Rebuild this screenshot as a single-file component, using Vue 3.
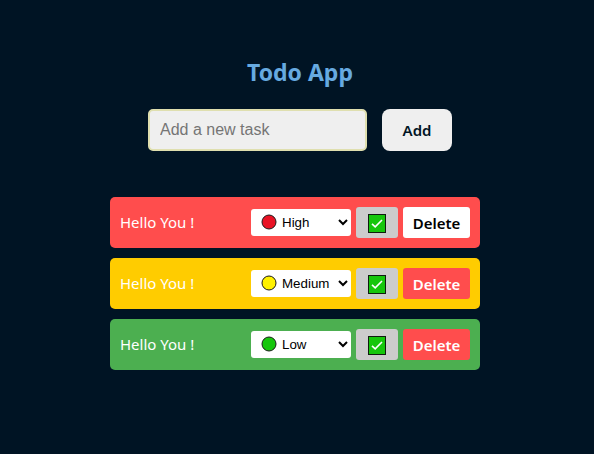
<script setup>
import { ref } from 'vue'

const draft = ref('')
const tasks = ref([
  { id: 1, text: 'Hello You !', priority: 'high' },
  { id: 2, text: 'Hello You !', priority: 'medium' },
  { id: 3, text: 'Hello You !', priority: 'low' },
])
let nextId = 4

function addTask() {
  const text = draft.value.trim()
  if (!text) return
  tasks.value.push({ id: nextId++, text, priority: 'low' })
  draft.value = ''
}

function removeTask(id) {
  tasks.value = tasks.value.filter((task) => task.id !== id)
}
</script>

<template>
  <main class="app">
    <h1 class="title">Todo App</h1>
    <form class="form" @submit.prevent="addTask">
      <input v-model="draft" class="field" type="text" placeholder="Add a new task" aria-label="New task" />
      <button class="add" type="submit">Add</button>
    </form>
    <ul class="list">
      <li v-for="task in tasks" :key="task.id" class="task" :class="task.priority">
        <span class="text">{{ task.text }}</span>
        <label class="picker">
          <select v-model="task.priority" class="select" aria-label="Priority">
            <option value="high">High</option>
            <option value="medium">Medium</option>
            <option value="low">Low</option>
          </select>
          <svg class="dot" viewBox="0 0 16 16" aria-hidden="true">
            <circle cx="8" cy="8" r="7" />
          </svg>
        </label>
        <button class="done" type="button" aria-label="Complete">
          <svg class="tick" viewBox="0 0 18 19" aria-hidden="true">
            <rect x="0.5" y="0.5" width="17" height="18" fill="#16c60c" stroke="#101c10" />
            <path d="M4 9.8 L7.2 12.8 L14 6" fill="none" stroke="#fff" stroke-width="1.6" />
          </svg>
        </button>
        <button class="delete" type="button" @click="removeTask(task.id)">Delete</button>
      </li>
    </ul>
  </main>
</template>

<style>
body {
  margin: 0;
  background: #001424;
}
</style>

<style scoped>
.app {
  box-sizing: border-box;
  max-width: 386px;
  margin: 0 auto;
  padding: 56px 0 40px 6px;
  font-family: "Segoe UI", "Noto Sans", "Open Sans", sans-serif;
  font-size: 15px;
}
.title {
  margin: 0;
  color: #67aae0;
  font-size: 23px;
  font-weight: 700;
  line-height: 33px;
  text-align: center;
}
.form {
  display: flex;
  justify-content: center;
  gap: 15px;
  margin: 20px 0 46px;
}
.field {
  box-sizing: border-box;
  width: 219px;
  height: 42px;
  padding: 10px;
  border: 2px solid #dfdfaf;
  border-radius: 5px;
  background: #efefef;
  font-family: "Liberation Sans", Arial, sans-serif;
  font-size: 16px;
}
.field::placeholder {
  color: #757575;
}
button {
  border: 0;
  font-family: inherit;
  font-size: 15px;
  font-weight: 600;
  cursor: pointer;
}
.add {
  width: 70px;
  padding: 0;
  border-radius: 8px;
  background: #efefef;
  color: #001424;
}
.list {
  display: flex;
  flex-direction: column;
  gap: 10px;
  margin: 0;
  padding: 0 10px 0 0;
  list-style: none;
}
.task {
  display: flex;
  align-items: center;
  gap: 5px;
  padding: 10px;
  border-radius: 5px;
  color: #fff;
}
.text {
  flex: 1;
  line-height: 21px;
}
.high {
  background: #ff4d4d;
}
.medium {
  background: #ffcc00;
}
.low {
  background: #4caf50;
}
.picker {
  position: relative;
  display: block;
}
.select {
  display: block;
  width: 100px;
  height: 27px;
  padding: 0 0 0 27px;
  border: 0;
  border-radius: 3px;
  background-color: #fff;
  color: #000;
  font-family: "Liberation Sans", Arial, sans-serif;
}
.dot {
  position: absolute;
  top: 5px;
  left: 10px;
  width: 16px;
  height: 16px;
  stroke: #1a1a1a;
  pointer-events: none;
}
.high .dot {
  fill: #e81224;
}
.medium .dot {
  fill: #fff100;
}
.low .dot {
  fill: #16c60c;
}
.done,
.delete {
  height: 31px;
  padding: 0;
  border-radius: 3px;
}
.done {
  display: grid;
  place-items: center;
  width: 42px;
  padding-top: 2px;
  background: #ccc;
}
.tick {
  width: 18px;
  height: 19px;
}
.delete {
  width: 67px;
  background: #ff4d4d;
  color: #fff;
}
.high .delete {
  background: #fff;
  color: #000;
}
</style>
